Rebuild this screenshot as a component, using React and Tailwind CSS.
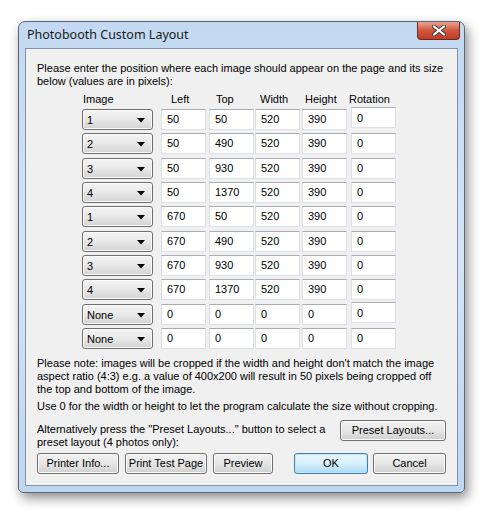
import React from 'react';

const rows = [
  { img: '1', vals: ['50', '50', '520', '390', '0'], rotUp: true },
  { img: '2', vals: ['50', '490', '520', '390', '0'] },
  { img: '3', vals: ['50', '930', '520', '390', '0'], extra: true },
  { img: '4', vals: ['50', '1370', '520', '390', '0'] },
  { img: '1', vals: ['670', '50', '520', '390', '0'] },
  { img: '2', vals: ['670', '490', '520', '390', '0'], extra: true },
  { img: '3', vals: ['670', '930', '520', '390', '0'] },
  { img: '4', vals: ['670', '1370', '520', '390', '0'] },
  { img: 'None', vals: ['0', '0', '0', '0', '0'], rotUp: true, extra: true },
  { img: 'None', vals: ['0', '0', '0', '0', '0'] },
];

// left offsets of each text box relative to previous box
const gaps = ['ml-[8px]', 'ml-[3px]', 'ml-[1px]', 'ml-[2px]', 'ml-[4px]'];

function Combo({ value }) {
  return (
    <div className="w-[71px] h-[21px] rounded-[3px] border border-[#707070] bg-gradient-to-b from-[#f4f4f4] via-[#e8e8e8] to-[#d3d3d3] flex items-center pl-[4px] pr-[7px] pt-[1px] shadow-[inset_0_0_0_1px_#fafafa]">
      <span className="flex-1">{value}</span>
      <svg width="8" height="5" viewBox="0 0 8 5"><path d="M0 0h8L4 4.5z" fill="#000" /></svg>
    </div>
  );
}

function Field({ value, cls }) {
  return (
    <div className={`w-[45px] h-[21px] bg-white border border-[#dbdfe6] border-t-[#abadb3] flex items-center pl-[5px] ${cls}`}>
      {value}
    </div>
  );
}

function Btn({ children, w, def }) {
  return (
    <div
      className={`${w} h-[21px] rounded-[3px] border flex items-center justify-center ${
        def
          ? 'border-[#3c7fb1] bg-gradient-to-b from-[#eaf6fd] via-[#d9f0fc] to-[#a7d9f5] shadow-[inset_0_0_0_1px_#c4e5f6]'
          : 'border-[#707070] bg-gradient-to-b from-[#f2f2f2] via-[#e6e6e6] to-[#d0d0d0] shadow-[inset_0_0_0_1px_#fbfbfb]'
      }`}
    >
      {children}
    </div>
  );
}

export default function App() {
  return (
    <div className="w-[487px] h-[514px] bg-white pt-[21px] pl-[18px] text-[11px] text-black" style={{ fontFamily: '"Liberation Sans", Arial, sans-serif' }}>
      <div className="relative w-[447px] h-[472px] rounded-t-[7px] rounded-b-[5px] border border-[#5a6678] bg-gradient-to-b from-[#c2d9f1] via-[#d3e4f6] to-[#bfd6ef] shadow-[3px_5px_12px_rgba(0,0,0,0.45)] flex flex-col px-[6px] pb-[6px]">
        <div className="h-[26px] flex items-center pl-[2px] pt-[1px] text-[12.5px] text-[#1a1a1a]" style={{ fontFamily: '"Noto Sans", sans-serif' }}>
          Photobooth Custom Layout
        </div>
        <div className="absolute right-[4px] top-0 w-[43px] h-[18px] rounded-b-[4px] border border-t-0 border-[#6b2a22] bg-gradient-to-b from-[#e8a493] via-[#d0563f] to-[#c23c24] flex items-center justify-center">
          <svg width="14" height="11" viewBox="0 0 14 11">
            <path d="M2 1.5L12 9.5M12 1.5L2 9.5" stroke="#3a3a3a" strokeWidth="4" strokeLinecap="square" />
            <path d="M2 1.5L12 9.5M12 1.5L2 9.5" stroke="#fff" strokeWidth="2" strokeLinecap="square" />
          </svg>
        </div>
        <div className="flex-1 border border-[#7f93b0] bg-[#f0f0f0] pl-[11px] pr-[11px] pt-[13px] flex flex-col">
          <p className="leading-[13px]">
            Please enter the position where each image should appear on the page and its size below (values are in pixels):
          </p>
          <div className="ml-[45px] mt-[4px] flex flex-col">
            <div className="flex h-[14px] items-center">
              <span className="w-[71px] pl-[1px]">Image</span>
              <span className="w-[53px] pl-[18px]">Left</span>
              <span className="w-[46px] pl-[10px]">Top</span>
              <span className="w-[46px] pl-[8px]">Width</span>
              <span className="w-[47px] pl-[7px]">Height</span>
              <span className="pl-[4px]">Rotation</span>
            </div>
            <div className="flex flex-col mt-[3px]">
              {rows.map((r, i) => (
                <div key={i} className={`flex items-center ${i === 0 ? '' : r.extra ? 'mt-[4px]' : 'mt-[3px]'}`}>
                  <Combo value={r.img} />
                  {r.vals.map((v, j) => (
                    <Field key={j} value={v} cls={`${gaps[j]} ${j === 4 && r.rotUp ? 'mt-[-4px] items-start pt-[2px]' : ''}`} />
                  ))}
                </div>
              ))}
            </div>
          </div>
          <p className="leading-[13px] mt-[8px]">
            Please note: images will be cropped if the width and height don't match the image aspect ratio (4:3) e.g. a value of 400x200 will result in 50 pixels being cropped off the top and bottom of the image.
          </p>
          <p className="leading-[13px] mt-[4px]">
            Use 0 for the width or height to let the program calculate the size without cropping.
          </p>
          <div className="flex items-start mt-[10px]">
            <p className="leading-[13px] w-[300px]">
              Alternatively press the "Preset Layouts..." button to select a preset layout (4 photos only):
            </p>
            <div className="ml-auto -mt-[3px]">
              <Btn w="w-[106px]">Preset Layouts...</Btn>
            </div>
          </div>
          <div className="flex mt-[4px]">
            <Btn w="w-[82px]">Printer Info...</Btn>
            <div className="ml-[6px]"><Btn w="w-[82px]">Print Test Page</Btn></div>
            <div className="ml-[6px]"><Btn w="w-[60px]">Preview</Btn></div>
            <div className="ml-auto"><Btn w="w-[74px]" def>OK</Btn></div>
            <div className="ml-[5px]"><Btn w="w-[73px]">Cancel</Btn></div>
          </div>
        </div>
      </div>
    </div>
  );
}
